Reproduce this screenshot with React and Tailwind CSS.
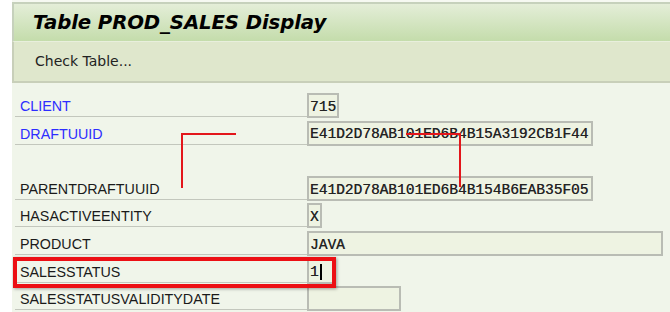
import React from 'react';

const rows = [
  { label: 'CLIENT', value: '715', width: 'w-[32px]', blue: true },
  { label: 'DRAFTUUID', value: 'E41D2D78AB101ED6B4B15A3192CB1F44', width: 'w-[286px]', blue: true },
  { spacer: true },
  { label: 'PARENTDRAFTUUID', value: 'E41D2D78AB101ED6B4B154B6EAB35F05', width: 'w-[286px]' },
  { label: 'HASACTIVEENTITY', value: 'X', width: 'w-[15px]' },
  { label: 'PRODUCT', value: 'JAVA', width: 'w-[356px]' },
  { label: 'SALESSTATUS', value: '1', width: 'w-[28px]', cursor: true },
  { label: 'SALESSTATUSVALIDITYDATE', value: '', width: 'w-[94px]' },
];

const FieldRow = ({ row }) => {
  if (row.spacer) return <div className="h-[27.6px]" />;
  return (
    <div className="flex h-[27.6px]">
      <div
        className={`w-[292px] border-b border-[#c3c7bd] pl-[5px] flex items-end pb-[2px] text-[14.3px] leading-[16px] font-['Liberation_Sans',sans-serif] ${
          row.blue ? 'text-[#2d2dff]' : 'text-[#1a1a1a]'
        }`}
      >
        {row.label}
      </div>
      <div className="flex items-end">
        <div
          className={`${row.width} h-[25px] -mb-[1px] border-2 border-[#b9bcb4] bg-[#eef3e2] pl-[1px] pt-[3px] flex items-center font-['Liberation_Mono',monospace] text-[14.5px] text-[#222] leading-none [text-shadow:0.3px_0_0_#555]`}
        >
          {row.value}
          {row.cursor && <span className="inline-block w-[2px] h-[16px] bg-black ml-[1px] -mt-[2px]" />}
        </div>
      </div>
    </div>
  );
};

export default function App() {
  return (
    <div className="relative w-[670px] h-[312px] bg-white flex overflow-hidden">
      <div className="w-[12px] shrink-0 bg-white" />
      <div className="flex-1 flex flex-col bg-[#f0f5ea]">
        <div className="h-[2px] bg-[#f6f9f2]" />
        <div className="h-[39px] border-t-2 border-l-2 border-[#c6d1bc] bg-gradient-to-b from-[#e4eed8] to-[#c4dcab] flex items-center pl-[19px]">
          <span className="font-['DejaVu_Sans',sans-serif] font-bold italic text-[19.7px] text-black tracking-[-0.1px]">
            Table PROD_SALES Display
          </span>
        </div>
        <div className="h-[42px] border-l-2 border-t border-b-2 border-[#c8cfb9] border-t-[#e8efdc] bg-[#dfe7cc] flex items-center pl-[21px]">
          <span className="font-['DejaVu_Sans',sans-serif] text-[14px] text-[#222]">Check Table...</span>
        </div>
        <div className="pt-[6.5px] pl-[3px] flex flex-col">
          {rows.map((row, i) => (
            <FieldRow key={i} row={row} />
          ))}
        </div>
      </div>

      {/* red annotations */}
      <div className="absolute left-[181px] top-[133px] w-[55px] h-[2px] bg-[#e3161b]" />
      <div className="absolute left-[181px] top-[133px] w-[2px] h-[55px] bg-[#e3161b]" />
      <div className="absolute left-[406px] top-[133px] w-[55px] h-[2px] bg-[#e3161b]" />
      <div className="absolute left-[459px] top-[133px] w-[2px] h-[54px] bg-[#e3161b]" />
      <div className="absolute left-[13px] top-[257px] w-[323px] h-[31px] border-4 border-[#ec0f14] shadow-[1px_1px_3px_rgba(0,0,0,0.35)]" />
    </div>
  );
}
